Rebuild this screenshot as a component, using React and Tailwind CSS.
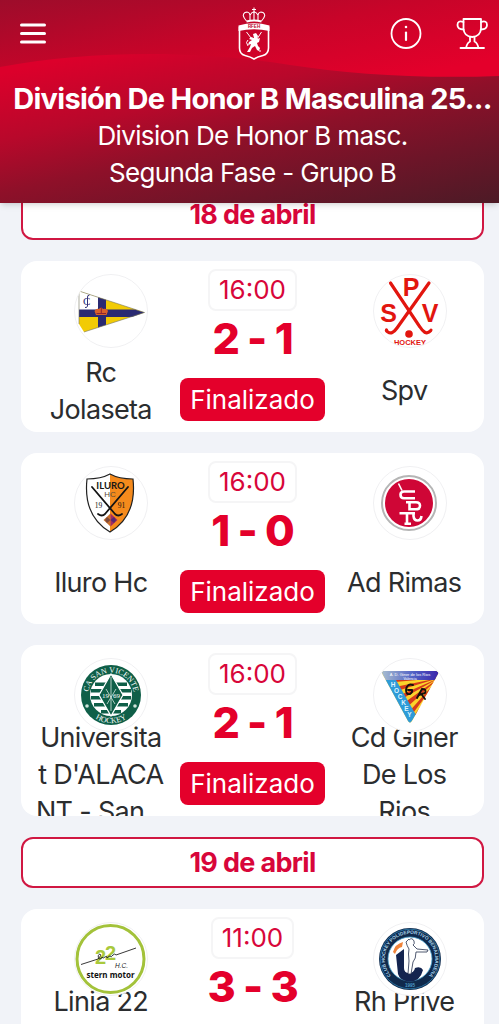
import { useId } from 'react'

function Jolaseta() {
  return (
    <g>
      <path d="M5 17 L70.500 38.500 L10 58 L5 50 Z" fill="#f2cb05" />
      <path d="M5 17 L25 23.500 V36 H5 Z" fill="#fff" />
      <path d="M24 23.200 L32 25.800 V51 L24 53.500 Z" fill="#2a2a72" />
      <path d="M5 35.500 H61 L70.500 38.500 L58 43 H5 Z" fill="#2a2a72" />
      <path d="M5 50 V17 L70.500 38.500 L10 58" fill="none" stroke="#77775f" strokeWidth="0.6" />
      <path d="M22 41 L20.500 37 Q22 34 25 35 Q27 32.500 29 35 Q33 34 34 37 L32.500 41 Z" fill="#d9602a" />
      <path d="M22.500 39.500 H32 M27.300 33 V39" stroke="#8d2434" strokeWidth="1" />
      <text x="9" y="31" fontSize="11" fontFamily="Liberation Serif, serif" fill="#303078">C</text>
      <path d="M15.500 21 Q13 21 13.500 24 V32 Q13 34 11 33.500" fill="none" stroke="#303078" strokeWidth="1" />
    </g>
  )
}

function Spv() {
  return (
    <g fill="#e2160f" fontFamily="Liberation Sans, sans-serif" fontWeight="bold" textAnchor="middle">
      <g fill="none" stroke="#e2160f" strokeWidth="3.2" strokeLinecap="round">
        <path d="M17.500 9 L47 53 Q52 61 56 58 Q58 57 58 56" />
        <path d="M56 9 L24 54 Q19 61 15 58 Q13 57 13.500 56" />
      </g>
      <circle cx="36" cy="60" r="3.800" />
      <text x="38" y="21.500" fontSize="25">P</text>
      <text x="15.500" y="47.500" fontSize="25">S</text>
      <text x="57" y="47.500" fontSize="25">V</text>
      <text x="37" y="71" fontSize="7.500">HOCKEY</text>
    </g>
  )
}

function Iluro() {
  return (
    <g textAnchor="middle">
      <path d="M13 13 Q27 13 36 8 Q45 13 59 13 Q63 50 36 66 Q9 50 13 13 Z" fill="#fff" />
      <path d="M36 8 Q45 13 59 13 Q63 50 36 66 Z" fill="#f58a1c" />
      <path d="M13 13 Q27 13 36 8 Q45 13 59 13 Q63 50 36 66 Q9 50 13 13 Z" fill="none" stroke="#222" strokeWidth="1.2" />
      <text x="36.500" y="22.500" fontSize="9.500" fontWeight="bold" fontFamily="Lato, sans-serif" fill="#161616">ILURO</text>
      <text x="36" y="31" fontSize="8" fontFamily="Liberation Sans, sans-serif" fill="#5d4a37">HC</text>
      <g fill="none" stroke="#141414" strokeWidth="1.8" strokeLinecap="round">
        <path d="M18 21 L41 48 Q44 51 48 48" />
        <path d="M54 21 L31 48 Q28 51 24 48" />
      </g>
      <text x="24.500" y="42" fontSize="7.500" fontFamily="Liberation Serif, serif" fill="#111">19</text>
      <text x="47.500" y="42" fontSize="7.500" fontFamily="Liberation Serif, serif" fill="#111">91</text>
      <path d="M36.500 47.500 L29.500 54 L36.500 60.500 Z" fill="#c9702e" />
      <path d="M36.500 47.500 L43.500 54 L36.500 60.500 Z" fill="#a02c62" />
      <path d="M33 51 L36.500 54 L33 57 L31 54 Z" fill="#7d4a3c" />
      <path d="M40 51 L42 54 L40 57 L36.500 54 Z" fill="#542a72" />
    </g>
  )
}

function Rimas() {
  return (
    <g>
      <circle cx="36" cy="37" r="27" fill="#fff" stroke="#b5b5b5" strokeWidth="2" />
      <circle cx="36" cy="37" r="24" fill="#cf0636" />
      <g fill="none" stroke="#fff" strokeWidth="2.600">
        <path d="M25.500 17.500 L29 24.500" strokeWidth="1.600" />
        <path d="M42 25.500 H31 Q27.500 25.500 27.500 28.800 Q27.500 32.300 31 32.300 H42" />
        <path d="M33 36.300 H43 Q47 36.300 47 39.800 Q47 43.300 43 43.300 H36.500 V36.300" />
        <path d="M26.500 47.300 H42 M34 47.300 V58 M31.500 57.800 H38" />
        <path d="M40.500 46.500 V50 Q41 54.500 44.500 54.500 Q48 54.500 48.500 50" />
      </g>
    </g>
  )
}

function SanVicente() {
  const id = useId()
  return (
    <g>
      <circle cx="37" cy="37" r="30" fill="#0f5f48" />
      <circle cx="37" cy="37" r="21" fill="#fff" />
      <path
        d="M21 24.500 H53 V28 H21 Z M17 31 H57 V34.500 H17 Z M17 38 H57 V41.500 H17 Z M20 45 H54 V48.500 H20 Z M27 52 H47 V55.500 H27 Z"
        fill="#0f5f48"
      />
      <path d="M37 16 L49 37 L37 58 L25 37 Z" fill="#0f5f48" stroke="#fff" strokeWidth="1.200" />
      <path d="M37 19 V53 M32 31 L41 46 M42 31 L33 46" stroke="#d8e8e1" strokeWidth="0.8" />
      <text x="28" y="39.500" fontSize="7" fontFamily="Liberation Serif, serif" fill="#fff">19</text>
      <text x="39" y="39.500" fontSize="7" fontFamily="Liberation Serif, serif" fill="#fff">69</text>
      <circle cx="13" cy="48" r="1.800" fill="#cfe3da" />
      <circle cx="61" cy="48" r="1.800" fill="#cfe3da" />
      <path id={`${id}-top`} d="M17 49 A23 23 0 1 1 57 49" fill="none" />
      <path id={`${id}-low`} d="M9 41 A28.300 28.300 0 0 0 65 41" fill="none" />
      <g fontFamily="Liberation Serif, serif" fontSize="8" fill="#fff" textAnchor="middle">
        <text><textPath href={`#${id}-top`} startOffset="50%">CA SAN VICENTE</textPath></text>
        <text><textPath href={`#${id}-low`} startOffset="50%">HOCKEY</textPath></text>
      </g>
    </g>
  )
}

function Giner() {
  const id = useId()
  return (
    <g>
      <defs>
        <linearGradient id={`${id}-band`}>
          <stop offset="0" stopColor="#a9bfd0" />
          <stop offset="0.55" stopColor="#4f5fc4" />
          <stop offset="1" stopColor="#3a1fa8" />
        </linearGradient>
        <clipPath id={`${id}-tri`}>
          <path d="M11 13 H63 Q66 13 65 16 L39 63 Q37 66 35 63 L9.500 16 Q8 13 11 13 Z" />
        </clipPath>
      </defs>
      <g clipPath={`url(#${id}-tri)`}>
        <rect x="8" y="12" width="60" height="56" fill="#fbd32b" />
        <path
          d="M66 20 L22 20 L22 24 Z M66 20 L22 29 L24 33 Z M66 20 L25 38 L27 42 Z M66 20 L28 47 L31 52 Z M66 20 L34 56 L38 58 Z M66 20 L41 58 L45 56 Z"
          fill="#d63a1c"
        />
        <rect x="8" y="12" width="60" height="10" fill={`url(#${id}-band)`} />
        <path d="M8 22 H23 L43 57 L36 67 Z" fill="#2e9bd8" />
      </g>
      <text x="37" y="18" fontSize="4" textAnchor="middle" fontFamily="Liberation Sans, sans-serif" fill="#fff">A. D. Giner de los Rios</text>
      <text x="37" y="21.500" fontSize="3.500" textAnchor="middle" fontFamily="Liberation Sans, sans-serif" fill="#fff">Valencia</text>
      <g fontSize="6.500" fontWeight="bold" textAnchor="middle" fontFamily="Liberation Sans, sans-serif" fill="#dff4ff">
        <text x="20" y="29">H</text>
        <text x="23.500" y="35">O</text>
        <text x="27" y="41">C</text>
        <text x="30.500" y="47">K</text>
        <text x="33.500" y="53">E</text>
        <text x="36.500" y="59">Y</text>
      </g>
      <g fill="none" stroke="#17110c" strokeWidth="1.900" strokeLinecap="round">
        <path d="M40 27 Q34 25 33 32 Q33 37 37 36 Q40 34 39 32 L35 32" />
        <path d="M44 40 L49 31 Q54 31 52 35 L46 37 M49 37 L52 41" />
      </g>
    </g>
  )
}

function Linia() {
  return (
    <g>
      <circle cx="36.500" cy="37" r="33.500" fill="#fff" stroke="#a3c23a" strokeWidth="3" />
      <g fontFamily="Liberation Sans, sans-serif" fontSize="20" fontWeight="bold" fill="#a9c93c">
        <text x="21" y="42">2</text>
        <text x="31" y="38">2</text>
      </g>
      <path d="M7 42.500 L24 37 Q28 33 26 32 Q23 33 25 37 Q28 37 28 35 Q29 37 31 35 Q33 33 33 36 Q35 34 36 34 Q37 36 39 33 Q41 31 42 33 L62 26" fill="none" stroke="#222" strokeWidth="0.9" />
      <text x="41" y="46" fontSize="6.500" fontStyle="italic" fontFamily="Liberation Sans, sans-serif" fill="#222">H.C.</text>
      <text x="36.500" y="56" fontSize="8" fontWeight="bold" textAnchor="middle" fontFamily="Noto Sans, sans-serif" fill="#111">stern motor</text>
    </g>
  )
}

function Benalmadena() {
  const id = useId()
  return (
    <g>
      <circle cx="37" cy="37" r="31" fill="#102a4c" />
      <circle cx="37" cy="37" r="29.800" fill="none" stroke="#2f7fae" strokeWidth="0.8" />
      <circle cx="37" cy="37" r="22" fill="#fff" stroke="#4aa3cf" strokeWidth="0.8" />
      <path d="M23 33 L31 27 V46 Q31 51 36 51 Q41 51 42 46 Q48 44 50 48 Q47 60 36 59.500 Q27 59 25 52 Z" fill="#14244f" />
      <path d="M20 30 Q22 22 30 20 L29 25 Q24 26 22 32 Z" fill="#f0843a" />
      <path d="M36 18 Q39 15 41 19 Q42 22 40 23 L44 27 L55 28 L54 30 L43 30 Q43 37 40 40 L38 52 H35 L36 39 Q35 31 36 27 Q34 24 33 20 L36 17" fill="#fff" stroke="#25304c" strokeWidth="0.8" />
      <path id={`${id}-a`} d="M21 56.500 A25.200 25.200 0 1 1 53 56.500" fill="none" />
      <g fontFamily="Liberation Sans, sans-serif" fontWeight="bold" textAnchor="middle">
        <text fontSize="4.800" fill="#a9d4ea">
          <textPath href={`#${id}-a`} startOffset="50%">CLUB HOCKEY POLIDEPORTIVO BENALMADENA</textPath>
        </text>
        <text x="37" y="65" fontSize="4.500" fill="#4d9cc6">1995</text>
      </g>
    </g>
  )
}

const matchdays = [
  {
    date: '18 de abril',
    matches: [
      {
        time: '16:00', score: '2 - 1',
        home: { name: ['Rc', 'Jolaseta'], logo: Jolaseta },
        away: { name: ['Spv'], logo: Spv },
      },
      {
        time: '16:00', score: '1 - 0',
        home: { name: ['Iluro Hc'], logo: Iluro },
        away: { name: ['Ad Rimas'], logo: Rimas },
      },
      {
        time: '16:00', score: '2 - 1',
        home: { name: ['Universita', "t D'ALACA", 'NT - San...'], logo: SanVicente },
        away: { name: ['Cd Giner', 'De Los', 'Rios'], logo: Giner },
      },
    ],
  },
  {
    date: '19 de abril',
    matches: [
      {
        time: '11:00', score: '3 - 3', top: true,
        home: { name: ['Linia 22'], logo: Linia },
        away: { name: ['Rh Prive'], logo: Benalmadena },
      },
    ],
  },
]

function Team({ team, side, top }) {
  const id = useId()
  const Logo = team.logo
  return (
    <div className="flex flex-col items-center pt-[13px]">
      <div className={`relative z-10 ${side === 'home' ? 'pl-5' : 'pl-3'}`}>
        <svg viewBox="0 0 74 74" className="block size-[74px]" aria-hidden="true">
          <defs>
            <clipPath id={id}><circle cx="37" cy="37" r="36.500" /></clipPath>
          </defs>
          <circle cx="37" cy="37" r="36.500" fill="#fff" />
          <g clipPath={`url(#${id})`}><Logo /></g>
          <circle cx="37" cy="37" r="36.500" fill="none" stroke="#f0f0f2" />
        </svg>
      </div>
      <div
        className={`-mt-[13px] flex h-[111px] shrink-0 flex-col text-center text-[27px] leading-[37px]
                    tracking-tight text-[#2b2d2f] ${top ? 'justify-start' : 'justify-center'}`}
      >
        {team.name.map((line) => (
          <span key={line} className="block whitespace-nowrap">{line}</span>
        ))}
      </div>
    </div>
  )
}

function MatchCard({ match }) {
  return (
    <article className="grid h-[171px] shrink-0 grid-cols-3 overflow-hidden rounded-2xl bg-white px-1">
      <Team team={match.home} side="home" top={match.top} />
      <div className="flex flex-col items-center pt-2">
        <time className="rounded-lg border-2 border-[#f5f5f6] px-[9px] text-[26px] leading-[38px] text-[#d8063a]">
          {match.time}
        </time>
        <strong className="mt-[2px] mb-[14px] text-[43px] leading-[51px] font-extrabold tracking-tight whitespace-nowrap text-[#e4002b]">
          {match.score}
        </strong>
        <span className="rounded-lg bg-[#e4002b] px-[10px] text-[26px] leading-[43px] text-white">
          Finalizado
        </span>
      </div>
      <Team team={match.away} side="away" top={match.top} />
    </article>
  )
}

function HeaderWaves() {
  return (
    <svg
      viewBox="0 0 499 203"
      preserveAspectRatio="none"
      className="absolute inset-0 -z-10 size-full"
      aria-hidden="true"
    >
      <defs>
        <linearGradient id="front" gradientUnits="userSpaceOnUse" x1="13" y1="58" x2="67" y2="297">
          <stop offset="0.05" stopColor="#dc002b" />
          <stop offset="0.32" stopColor="#b8082b" />
          <stop offset="0.53" stopColor="#8e1029" />
          <stop offset="0.77" stopColor="#6c1528" />
          <stop offset="1" stopColor="#4e1a26" />
        </linearGradient>
        <linearGradient id="back" gradientUnits="userSpaceOnUse" x1="0" y1="-5" x2="30" y2="150">
          <stop offset="0" stopColor="#9a0d2b" />
          <stop offset="0.55" stopColor="#c80429" />
          <stop offset="1" stopColor="#e4002b" />
        </linearGradient>
      </defs>
      <rect width="499" height="203" fill="url(#front)" />
      <path d="M0 0 H499 V76 C420 79 350 74 290 65 C200 50 90 50 0 67 Z" fill="url(#back)" />
    </svg>
  )
}

function Crest() {
  return (
    <svg viewBox="0 0 34 54" className="h-[54px] w-[34px]" role="img" aria-label="RFEH">
      <g fill="none" stroke="#fff">
        <path d="M17 0.500 V6 M15 2.500 H19" strokeWidth="1" />
        <path d="M9.500 14 Q4 8 8 5.500 Q12 4 13 8 V13 M24.500 14 Q30 8 26 5.500 Q22 4 21 8 V13 M13 8 Q17 1.500 21 8 M17 5 V13" strokeWidth="1.100" />
        <path d="M9.500 14.500 Q17 12.500 24.500 14.500" strokeWidth="2" />
        <path d="M2.500 20 V41 Q2.500 47 8 48.500 Q14 50 17 52 Q20 50 26 48.500 Q31.500 47 31.500 41 V20" strokeWidth="1.600" />
      </g>
      <path d="M1.500 18.500 Q17 14 32.500 18.500 V24 Q17 20.500 1.500 24 Z" fill="#fff" />
      <text x="17" y="21" fontSize="4.500" fontWeight="bold" textAnchor="middle" fontFamily="Liberation Sans, sans-serif" fill="#b8062b">RFEH</text>
      <path d="M16 27 L19 26 L21 29 L20 32 L23 31 L22 35 L20 36 L21 39 L23 41 L22 44 L20 43 L18 39 L15 41 L13 45 H10 L13 40 L14 37 L11 38 L12 35 L15 33 L12 32 L14 30 L17 31 Z" fill="#fff" />
      <path d="M9.500 25 L14 31 M24.500 25 L20 32 M11 39 Q8 35 11 33 M22 44 H24" fill="none" stroke="#fff" strokeWidth="1" />
    </svg>
  )
}

function Header() {
  return (
    <header className="relative isolate z-20 shrink-0 bg-[#a00d2a] pb-3 pl-[6px] text-center text-white shadow-md">
      <HeaderWaves />
      <div className="grid h-20 grid-cols-[1fr_auto_1fr] items-start pt-[7px] pr-[10px] pl-3">
        <button type="button" aria-label="Menú" className="mt-[10px] justify-self-start">
          <svg viewBox="0 0 30 32" className="h-8 w-[30px]" stroke="#fff" strokeWidth="3" strokeLinecap="round">
            <path d="M3.500 8 H26.500 M3.500 16.500 H26.500 M3.500 25 H26.500" />
          </svg>
        </button>
        <Crest />
        <div className="mt-[10px] flex gap-8 justify-self-end">
          <button type="button" aria-label="Información">
            <svg viewBox="0 0 34 34" className="size-[34px]" fill="none" stroke="#fff" strokeLinecap="round">
              <circle cx="17" cy="16.500" r="14.500" strokeWidth="1.800" />
              <path d="M17 15.500 V23" strokeWidth="2.200" />
              <circle cx="17" cy="10" r="0.600" strokeWidth="1.400" />
            </svg>
          </button>
          <button type="button" aria-label="Clasificación">
            <svg viewBox="0 0 34 34" className="size-[34px]" fill="none" stroke="#fff" strokeWidth="1.800" strokeLinejoin="round" strokeLinecap="round">
              <path d="M8.500 2 H26 V11.500 Q25.500 19.500 17.200 20 Q9 19.500 8.500 11.500 Z" />
              <path d="M8.500 5 Q2.500 3 2.500 8 Q2.500 12.500 8.500 12.500 M26 5 Q32 3 32 8 Q32 12.500 26 12.500" />
              <path d="M15 20 V24.500 Q12 26 11 31 M19.500 20 V24.500 Q22.500 26 23.500 31 M5.500 31 H29" />
            </svg>
          </button>
        </div>
      </div>
      <h1 className="truncate text-[29px] leading-[37px] font-bold tracking-tight">
        División De Honor B Masculina 25...
      </h1>
      <p className="text-[26px] leading-[37px] tracking-tight">Division De Honor B masc.</p>
      <p className="text-[26px] leading-[37px] tracking-tight">Segunda Fase - Grupo B</p>
    </header>
  )
}

export default function App() {
  return (
    <div className="flex h-screen flex-col overflow-hidden bg-[#f1f3f8] font-['Inter',sans-serif]">
      <Header />
      <main className="-mt-[14px] flex min-h-0 flex-1 flex-col gap-[21px] overflow-y-auto pr-[15px] pl-[21px] [scrollbar-width:none]">
        {matchdays.map((day) => (
          <section key={day.date} className="flex shrink-0 flex-col gap-[21px]">
            <h2 className="rounded-xl border-2 border-[#d01742] bg-white text-center text-[27px] leading-[47px] font-bold tracking-tight text-[#d8063a]">
              {day.date}
            </h2>
            {day.matches.map((match, i) => (
              <MatchCard key={i} match={match} />
            ))}
          </section>
        ))}
      </main>
    </div>
  )
}
